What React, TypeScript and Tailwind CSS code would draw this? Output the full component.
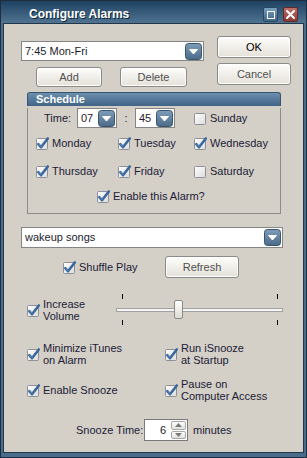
import React from "react";

const FONT = { fontFamily: '"Liberation Sans", Arial, sans-serif' };

function DropBtn() {
  return (
    <svg width="17" height="17" viewBox="0 0 17 17" className="shrink-0">
      <defs>
        <linearGradient id="dbg" x1="0" y1="0" x2="0" y2="1">
          <stop offset="0" stopColor="#7d9dba" />
          <stop offset="1" stopColor="#4a6a88" />
        </linearGradient>
      </defs>
      <rect x="0.5" y="0.5" width="16" height="16" rx="3" fill="url(#dbg)" stroke="#3a546c" />
      <path d="M4.5 6.5 H12.5 L8.5 11 Z" fill="#ffffff" stroke="#ffffff" strokeWidth="1" strokeLinejoin="round" />
    </svg>
  );
}

function Check({ on }: { on: boolean }) {
  return (
    <svg width="13" height="13" viewBox="0 0 13 13" className="shrink-0 overflow-visible">
      <defs>
        <linearGradient id="cbg" x1="0" y1="0" x2="1" y2="1">
          <stop offset="0" stopColor="#ffffff" />
          <stop offset="1" stopColor="#dcdcdc" />
        </linearGradient>
      </defs>
      <rect x="0.5" y="1.5" width="11" height="11" rx="1" fill="url(#cbg)" stroke="#8d9197" />
      {on && (
        <>
          <path d="M2.3 7.2 L5 10.2 L11.8 1.5" fill="none" stroke="#3a679c" strokeWidth="2.6" strokeLinecap="round" strokeLinejoin="round" />
          <path d="M2.8 7.2 L5 9.4" fill="none" stroke="#7da3cc" strokeWidth="0.8" strokeLinecap="round" />
        </>
      )}
    </svg>
  );
}

function CB({ on, children, className = "" }: { on: boolean; children: React.ReactNode; className?: string }) {
  return (
    <div className={"flex items-center gap-[3px] " + className}>
      <Check on={on} />
      <div className="text-[11px] leading-[12px] text-[#1b2036]">{children}</div>
    </div>
  );
}

function Btn({ children, className = "", dark = false }: { children: React.ReactNode; className?: string; dark?: boolean }) {
  return (
    <div
      className={
        "flex items-center justify-center rounded-[3px] border border-[#8a8a8a] bg-gradient-to-b from-[#fdfdfb] to-[#e4e1d8] text-[11px] shadow-[inset_0_0_0_1px_#ffffff] " +
        (dark ? "text-[#000000] " : "text-[#505050] ") +
        className
      }
    >
      {children}
    </div>
  );
}

function Combo({ text, className = "" }: { text: string; className?: string }) {
  return (
    <div className={"flex items-center border border-[#858585] bg-white pl-[3px] pr-[1px] " + className}>
      <div className="flex-1 text-[11px] text-[#1b1b2e]">{text}</div>
      <DropBtn />
    </div>
  );
}

function SmallTri({ up }: { up: boolean }) {
  return (
    <svg width="7" height="4" viewBox="0 0 7 4">
      <path d={up ? "M0 4 L3.5 0 L7 4 Z" : "M0 0 L7 0 L3.5 4 Z"} fill="#7a7a7a" />
    </svg>
  );
}

export default function App() {
  return (
    <div style={FONT} className="w-[307px] h-[458px] flex flex-col border border-[#1d2f3f] bg-[#4a6c8b]">
      {/* Title bar */}
      <div className="h-[22px] flex items-start bg-gradient-to-b from-[#1f4262] to-[#4f7391] pt-[5px]">
        <div className="pl-[28px] flex-1 text-[12px] font-bold leading-[16px] text-white [text-shadow:1px_1px_0_#10263a]">
          Configure Alarms
        </div>
        <div className="flex gap-[5px] mr-[8px] mt-[1px]">
          <div className="w-[15px] h-[15px] rounded-[2px] border border-[#2b4761] bg-gradient-to-b from-[#7aa0c2] to-[#40648a] flex items-center justify-center">
            <div className="w-[8px] h-[8px] border-[1.5px] border-white" />
          </div>
          <div className="w-[15px] h-[15px] rounded-[2px] border border-[#5e2a28] bg-gradient-to-b from-[#c0706a] to-[#8a3a36] flex items-center justify-center">
            <svg width="9" height="9" viewBox="0 0 9 9">
              <path d="M1 1 L8 8 M8 1 L1 8" stroke="#ffffff" strokeWidth="2" strokeLinecap="round" />
            </svg>
          </div>
        </div>
      </div>

      {/* Body */}
      <div className="flex-1 mx-[2px] mb-[4px] border border-[#22384a] bg-[#d4d0c8] pl-[17px] pt-[12px]">
        <div className="flex">
          <div className="w-[183px] pt-[5px]">
            <Combo text="7:45 Mon-Fri" className="h-[20px]" />
            <div className="flex mt-[6px]">
              <Btn className="ml-[15px] w-[66px] h-[20px]">Add</Btn>
              <Btn className="ml-[18px] w-[67px] h-[20px]">Delete</Btn>
            </div>
          </div>
          <div className="ml-[13px] flex flex-col gap-[5px]">
            <Btn dark className="w-[74px] h-[22px]">OK</Btn>
            <Btn className="w-[74px] h-[22px]">Cancel</Btn>
          </div>
        </div>

        {/* Schedule */}
        <div className="ml-[6px] mt-[5px] w-[254px]">
          <div className="h-[14px] rounded-t-[3px] bg-gradient-to-b from-[#6d8fae] to-[#3f6486] border border-b-0 border-[#38566f] pl-[8px] text-[11px] font-bold leading-[13px] text-white">
            Schedule
          </div>
          <div className="h-[106px] border border-t-0 border-[#8c8c8c]">
            <div className="flex items-center mt-[2px] h-[20px] pl-[16px]">
              <div className="w-[33px] text-[11px] text-[#1b2036]">Time:</div>
              <div className="w-[40px] h-[20px] flex items-center border border-[#858585] bg-white pl-[3px] pr-[1px]">
                <div className="flex-1 text-[11px] text-[#2a1a30]">07</div>
                <DropBtn />
              </div>
              <div className="w-[18px] text-center text-[11px] text-[#1b2036]">:</div>
              <div className="w-[40px] h-[20px] flex items-center border border-[#858585] bg-white pl-[3px] pr-[1px]">
                <div className="flex-1 text-[11px] text-[#2a1a30]">45</div>
                <DropBtn />
              </div>
              <CB on={false} className="ml-[19px]">Sunday</CB>
            </div>
            <div className="flex items-center mt-[8px] h-[14px] pl-[8px]">
              <CB on className="w-[82px]">Monday</CB>
              <CB on className="w-[76px]">Tuesday</CB>
              <CB on>Wednesday</CB>
            </div>
            <div className="flex items-center mt-[14px] h-[14px] pl-[8px]">
              <CB on className="w-[82px]">Thursday</CB>
              <CB on className="w-[76px]">Friday</CB>
              <CB on={false}>Saturday</CB>
            </div>
            <div className="flex items-center mt-[11px] h-[14px] pl-[69px]">
              <CB on>Enable this Alarm?</CB>
            </div>
          </div>
        </div>

        {/* Playlist */}
        <Combo text="wakeup songs" className="mt-[13px] w-[262px] h-[21px]" />
        <div className="flex items-center mt-[8px] h-[22px]">
          <CB on className="ml-[42px] w-[102px]">Shuffle Play</CB>
          <Btn className="w-[74px] h-[22px]">Refresh</Btn>
        </div>

        {/* Volume */}
        <div className="flex items-center mt-[16px] h-[32px]">
          <CB on className="ml-[6px] w-[89px]">
            Increase
            <br />
            Volume
          </CB>
          <div className="relative w-[167px] h-[32px]">
            <div className="absolute left-[6px] top-0 w-px h-[5px] bg-black" />
            <div className="absolute left-[161px] top-0 w-px h-[5px] bg-black" />
            <div className="absolute left-[6px] top-[26px] w-px h-[5px] bg-black" />
            <div className="absolute left-[161px] top-[26px] w-px h-[5px] bg-black" />
            <div className="absolute left-0 right-0 top-[14px] h-[4px] border border-[#a2a2a2] bg-[#f4f4f2]" />
            <div className="absolute left-[58px] top-[6px] w-[9px] h-[19px] rounded-[2px] border border-[#8a8a8a] bg-gradient-to-b from-[#ffffff] to-[#dedbd2]" />
          </div>
        </div>

        {/* Options */}
        <div className="flex items-center mt-[15px] h-[26px]">
          <CB on className="ml-[6px] w-[138px]">
            Minimize iTunes
            <br />
            on Alarm
          </CB>
          <CB on>
            Run iSnooze
            <br />
            at Startup
          </CB>
        </div>
        <div className="flex items-center mt-[10px] h-[26px]">
          <CB on className="ml-[6px] w-[138px]">Enable Snooze</CB>
          <CB on>
            Pause on
            <br />
            Computer Access
          </CB>
        </div>

        {/* Snooze time */}
        <div className="flex items-center mt-[16px] h-[22px]">
          <div className="ml-[55px] w-[68px] text-[11px] text-[#1b2036]">Snooze Time:</div>
          <div className="w-[44px] h-[22px] flex border border-[#7a7a7a] bg-white">
            <div className="flex-1 flex items-center justify-end pr-[4px] text-[11px] text-[#1b1b2e]">6</div>
            <div className="w-[17px] flex flex-col gap-px p-px">
              <div className="flex-1 flex items-center justify-center rounded-[2px] border border-[#a8a8a8] bg-gradient-to-b from-white to-[#e2e0da]">
                <SmallTri up />
              </div>
              <div className="flex-1 flex items-center justify-center rounded-[2px] border border-[#a8a8a8] bg-gradient-to-b from-white to-[#e2e0da]">
                <SmallTri up={false} />
              </div>
            </div>
          </div>
          <div className="ml-[5px] text-[11px] text-[#1b2036]">minutes</div>
        </div>
      </div>
    </div>
  );
}
